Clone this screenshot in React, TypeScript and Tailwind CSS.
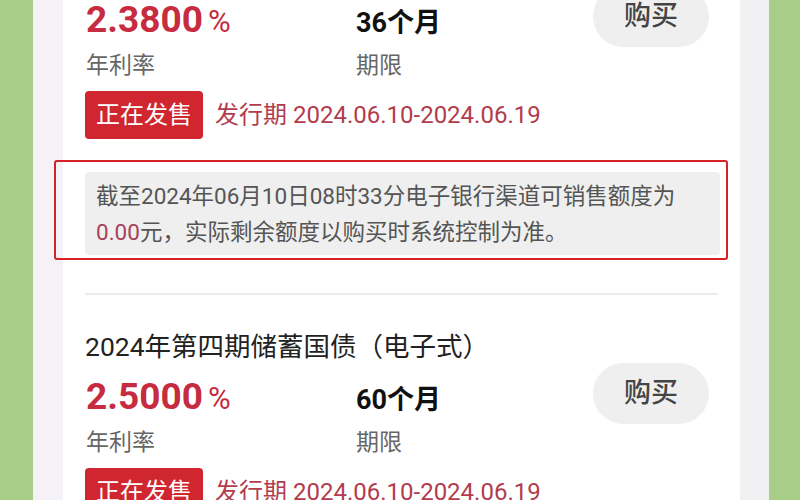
import React from 'react'

const font = { fontFamily: "Roboto, 'Noto Sans CJK SC', sans-serif" }

const RateRow = ({ rate, term }: { rate: string, term: string }) => {
    return (
        <div className="grid grid-cols-[271px_1fr_116px] items-baseline gap-y-[7px] pr-[9px]">
            <div className="text-[37px] leading-[44px] font-bold text-[#c62b40] pl-[1px]">
                {rate}
                <span className="ml-[5px] text-[31px] font-normal">%</span>
            </div>
            <div className="text-[27px] leading-[36px] font-bold text-[#111]">{term}</div>
            <button className="row-span-2 self-start -mt-[12px] h-[61px] w-[116px] rounded-full bg-[#efefef] text-[27px] font-medium text-[#444]">
                购买
            </button>
            <div className="text-[23px] leading-[30px] text-[#666] pl-[1px]">年利率</div>
            <div className="text-[23px] leading-[30px] text-[#666]">期限</div>
        </div>
    )
}

const SaleRow = () => {
    return (
        <div className="mt-[10px] flex items-center">
            <span className="h-[48px] rounded-[4px] bg-[#d0262f] px-[11px] text-[24px] leading-[48px] text-white">正在发售</span>
            <span className="ml-[12px] text-[24px] text-[#b23c4c]">发行期 2024.06.10-2024.06.19</span>
        </div>
    )
}

export default function App() {
    return (
        <div className="flex h-[500px] w-[800px] overflow-hidden bg-white" style={font}>
            <div className="w-[33px] shrink-0 bg-[#a8cd88]" />
            <div className="w-[30px] shrink-0 bg-[#f4f2f7]" />
            <div className="flex-1 bg-white px-[22px]">
                <div className="-mt-[2px]">
                    <RateRow rate="2.3800" term="36个月" />
                    <SaleRow />
                    <div className="mt-[21px] -ml-[31px] -mr-[10px] rounded-[3px] border-2 border-[#d42226] pl-[29px] pr-[6px] pt-[10px] pb-[3px]">
                        <div className="rounded-[4px] bg-[#efefef] pl-[11px] pt-[6px] pb-[5px] text-[22.5px] leading-[36px] text-[#555]">
                            <div>截至2024年06月10日08时33分电子银行渠道可销售额度为</div>
                            <div><span className="text-[#a8405a]">0.00</span>元，实际剩余额度以购买时系统控制为准。</div>
                        </div>
                    </div>
                    <div className="mt-[33px] h-[2px] bg-[#ebebeb]" />
                </div>
                <div className="mt-[34px] text-[26.5px] leading-[36px] text-[#222]">2024年第四期储蓄国债（电子式）</div>
                <div className="mt-[10px]">
                    <RateRow rate="2.5000" term="60个月" />
                    <SaleRow />
                </div>
            </div>
            <div className="w-[29px] shrink-0 bg-[#f1f0f3]" />
            <div className="w-[31px] shrink-0 bg-[#a8cd88]" />
        </div>
    )
}
